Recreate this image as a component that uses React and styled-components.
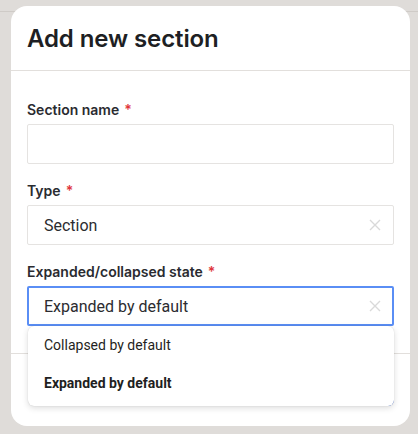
import React from 'react';
import styled, { createGlobalStyle } from 'styled-components';

const GlobalStyle = createGlobalStyle`
    html, body {
        margin: 0;
        padding: 0;
    }
    body {
        width: 418px;
        height: 434px;
        overflow: hidden;
        background: #dfdcd9;
        font-family: Inter, "Noto Sans", sans-serif;
    }
`;

const Backdrop = styled.div`
    height: 434px;
    padding: 6px 8px 8px 11px;
    box-sizing: border-box;
    background:
        linear-gradient(#cfcbc7, #cfcbc7) 0 11px / 100% 1px no-repeat,
        #dfdcd9;
`;

const Modal = styled.div`
    width: 399px;
    height: 420px;
    background: #fff;
    border-radius: 16px;
    display: flex;
    flex-direction: column;
    overflow: visible;
`;

const Header = styled.div`
    height: 64px;
    padding: 0 16px;
    display: flex;
    align-items: center;
    border-bottom: 1px solid #e2dfdc;
    h2 {
        margin: 0;
        font-size: 24px;
        font-weight: 600;
        color: #1e1f24;
        letter-spacing: -0.1px;
    }
`;

const Body = styled.div`
    padding: 29px 16px 11px;
    border-bottom: 1px solid #e2dfdc;
`;

const Field = styled.div`
    position: relative;
    margin-bottom: 17px;
    &:last-child {
        margin-bottom: 16px;
    }
`;

const Label = styled.label`
    display: block;
    font-size: 14px;
    line-height: 20px;
    font-weight: 600;
    color: #2a2b30;
    margin-bottom: 4px;
    span {
        color: #e0363c;
        margin-left: 5px;
    }
`;

const Control = styled.div`
    height: 40px;
    box-sizing: border-box;
    border: ${p => (p.$focused ? '2px solid #5a8ef5' : '1px solid #e5e3e1')};
    border-radius: 2px;
    display: flex;
    align-items: center;
    justify-content: space-between;
    padding: 0 ${p => (p.$focused ? '11px' : '12px')} 0 ${p => (p.$focused ? '15px' : '16px')};
    font-family: Roboto, "Liberation Sans", sans-serif;
    font-size: 16px;
    color: #2c2c30;
`;

const ClearIcon = () => (
    <svg width="12" height="12" viewBox="0 0 12 12">
        <path d="M1 1 L11 11 M11 1 L1 11" stroke="#d9d9d9" strokeWidth="1.4" fill="none" />
    </svg>
);

const Menu = styled.div`
    position: absolute;
    left: 1px;
    right: 0;
    top: 64px;
    background: #fff;
    border-radius: 6px;
    box-shadow: 0 2px 6px rgba(0, 0, 0, 0.14), 0 0 1px rgba(0, 0, 0, 0.2);
    padding: 0 0 4px;
    z-index: 5;
`;

const Option = styled.div`
    height: 38px;
    display: flex;
    align-items: center;
    padding: 0 16px;
    font-family: Roboto, "Liberation Sans", sans-serif;
    font-size: 14px;
    font-weight: ${p => (p.$selected ? 700 : 400)};
    color: #1f1f22;
`;

const Footer = styled.div`
    flex: 1;
    display: flex;
    justify-content: flex-end;
    align-items: flex-start;
    gap: 14px;
    padding: 16px 16px 0;
`;

const Button = styled.button`
    height: 36px;
    width: ${p => (p.$primary ? '68px' : '76px')};
    border-radius: 6px;
    border: none;
    background: ${p => (p.$primary ? '#1d56d8' : '#e4e1de')};
    color: ${p => (p.$primary ? '#fff' : '#333')};
    font-size: 14px;
`;

function App() {
    return (
        <>
            <GlobalStyle />
            <Backdrop>
                <Modal>
                    <Header>
                        <h2>Add new section</h2>
                    </Header>
                    <Body>
                        <Field>
                            <Label>Section name<span>*</span></Label>
                            <Control />
                        </Field>
                        <Field>
                            <Label>Type<span>*</span></Label>
                            <Control>
                                Section
                                <ClearIcon />
                            </Control>
                        </Field>
                        <Field>
                            <Label>Expanded/collapsed state<span>*</span></Label>
                            <Control $focused>
                                Expanded by default
                                <ClearIcon />
                            </Control>
                            <Menu>
                                <Option>Collapsed by default</Option>
                                <Option $selected>Expanded by default</Option>
                            </Menu>
                        </Field>
                    </Body>
                    <Footer>
                        <Button>Cancel</Button>
                        <Button $primary>Add</Button>
                    </Footer>
                </Modal>
            </Backdrop>
        </>
    );
}

export default App;
